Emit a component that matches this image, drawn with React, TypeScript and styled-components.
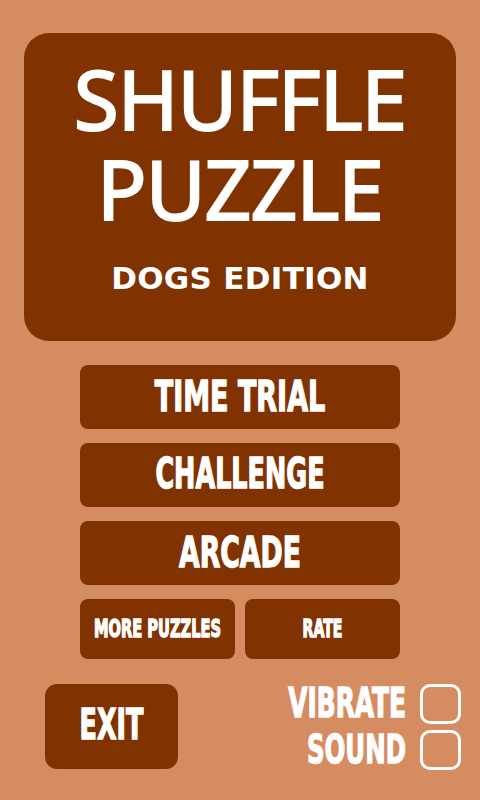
import React from "react";
import styled, { createGlobalStyle } from "styled-components";

const BROWN = "#803300";
const BG = "#D48C60";

const Global = createGlobalStyle`
  html, body { margin: 0; padding: 0; background: ${BG}; }
  #root { width: 480px; min-height: 800px; }
`;

const Page = styled.div`
  width: 480px;
  height: 800px;
  box-sizing: border-box;
  padding-top: 33px;
  display: flex;
  flex-direction: column;
  background: ${BG};
`;

const TitleCard = styled.div`
  height: 308px;
  margin: 0 24px;
  border-radius: 25px;
  background: ${BROWN};
  display: flex;
  flex-direction: column;
  align-items: center;
  box-sizing: border-box;
  padding-top: 20px;
`;

const Title = styled.h1`
  margin: 0;
  font-family: "Noto Sans", sans-serif;
  font-weight: normal;
  font-size: 82px;
  line-height: 90px;
  text-align: center;
  color: #fff;
  -webkit-text-stroke: 2px #fff;
  letter-spacing: -1px;
`;

const Subtitle = styled.div`
  margin-top: 27px;
  font-family: "DejaVu Sans", sans-serif;
  font-weight: bold;
  font-size: 31px;
  letter-spacing: 0.3px;
  color: #fff;
`;

const Menu = styled.div`
  width: 320px;
  align-self: center;
  margin-top: 24px;
  display: flex;
  flex-direction: column;
  gap: 14px;
`;

const Button = styled.div<{ $h: number; $r?: number }>`
  height: ${(p) => p.$h}px;
  border-radius: ${(p) => p.$r ?? 8}px;
  background: ${BROWN};
  display: flex;
  align-items: center;
  justify-content: center;
  overflow: hidden;
`;

const SmallRow = styled.div`
  display: grid;
  grid-template-columns: 155px 155px;
  gap: 10px;
`;

const Label = styled.span<{ $size: number; $sy?: number }>`
  display: inline-block;
  font-family: "DejaVu Sans Condensed", "DejaVu Sans", sans-serif;
  font-weight: bold;
  font-size: ${(p) => p.$size}px;
  line-height: 1;
  color: #fff;
  white-space: nowrap;
  -webkit-text-stroke: 0.9px #fff;
  transform: scaleY(${(p) => p.$sy ?? 1.45});
`;

const Bottom = styled.div`
  margin-top: 25px;
  padding: 0 19px 0 45px;
  display: flex;
  justify-content: space-between;
`;

const ExitButton = styled(Button)`
  width: 133px;
`;

const Toggles = styled.div`
  display: grid;
  grid-template-columns: auto 41px;
  column-gap: 14px;
  row-gap: 6px;
  align-items: center;
  justify-items: end;
`;

const Box = styled.div`
  width: 41px;
  height: 40px;
  box-sizing: border-box;
  border: 3px solid #fff;
  border-radius: 10px;
`;

export default function App() {
  return (
    <>
      <Global />
      <Page>
        <TitleCard>
          <Title>
            SHUFFLE
            <br />
            PUZZLE
          </Title>
          <Subtitle>DOGS EDITION</Subtitle>
        </TitleCard>
        <Menu>
          <Button $h={64}><Label $size={30} $sy={1.42}>TIME TRIAL</Label></Button>
          <Button $h={64}><Label $size={28.3} $sy={1.5}>CHALLENGE</Label></Button>
          <Button $h={64}><Label $size={29.7} $sy={1.43}>ARCADE</Label></Button>
          <SmallRow>
            <Button $h={60}><Label $size={16.3} $sy={1.52}>MORE PUZZLES</Label></Button>
            <Button $h={60}><Label $size={15.7} $sy={1.57}>RATE</Label></Button>
          </SmallRow>
        </Menu>
        <Bottom>
          <ExitButton $h={85} $r={12}><Label $size={28.3} $sy={1.5}>EXIT</Label></ExitButton>
          <Toggles>
            <Label $size={27.7} $sy={1.49}>VIBRATE</Label>
            <Box />
            <Label $size={27.2} $sy={1.41}>SOUND</Label>
            <Box />
          </Toggles>
        </Bottom>
      </Page>
    </>
  );
}
